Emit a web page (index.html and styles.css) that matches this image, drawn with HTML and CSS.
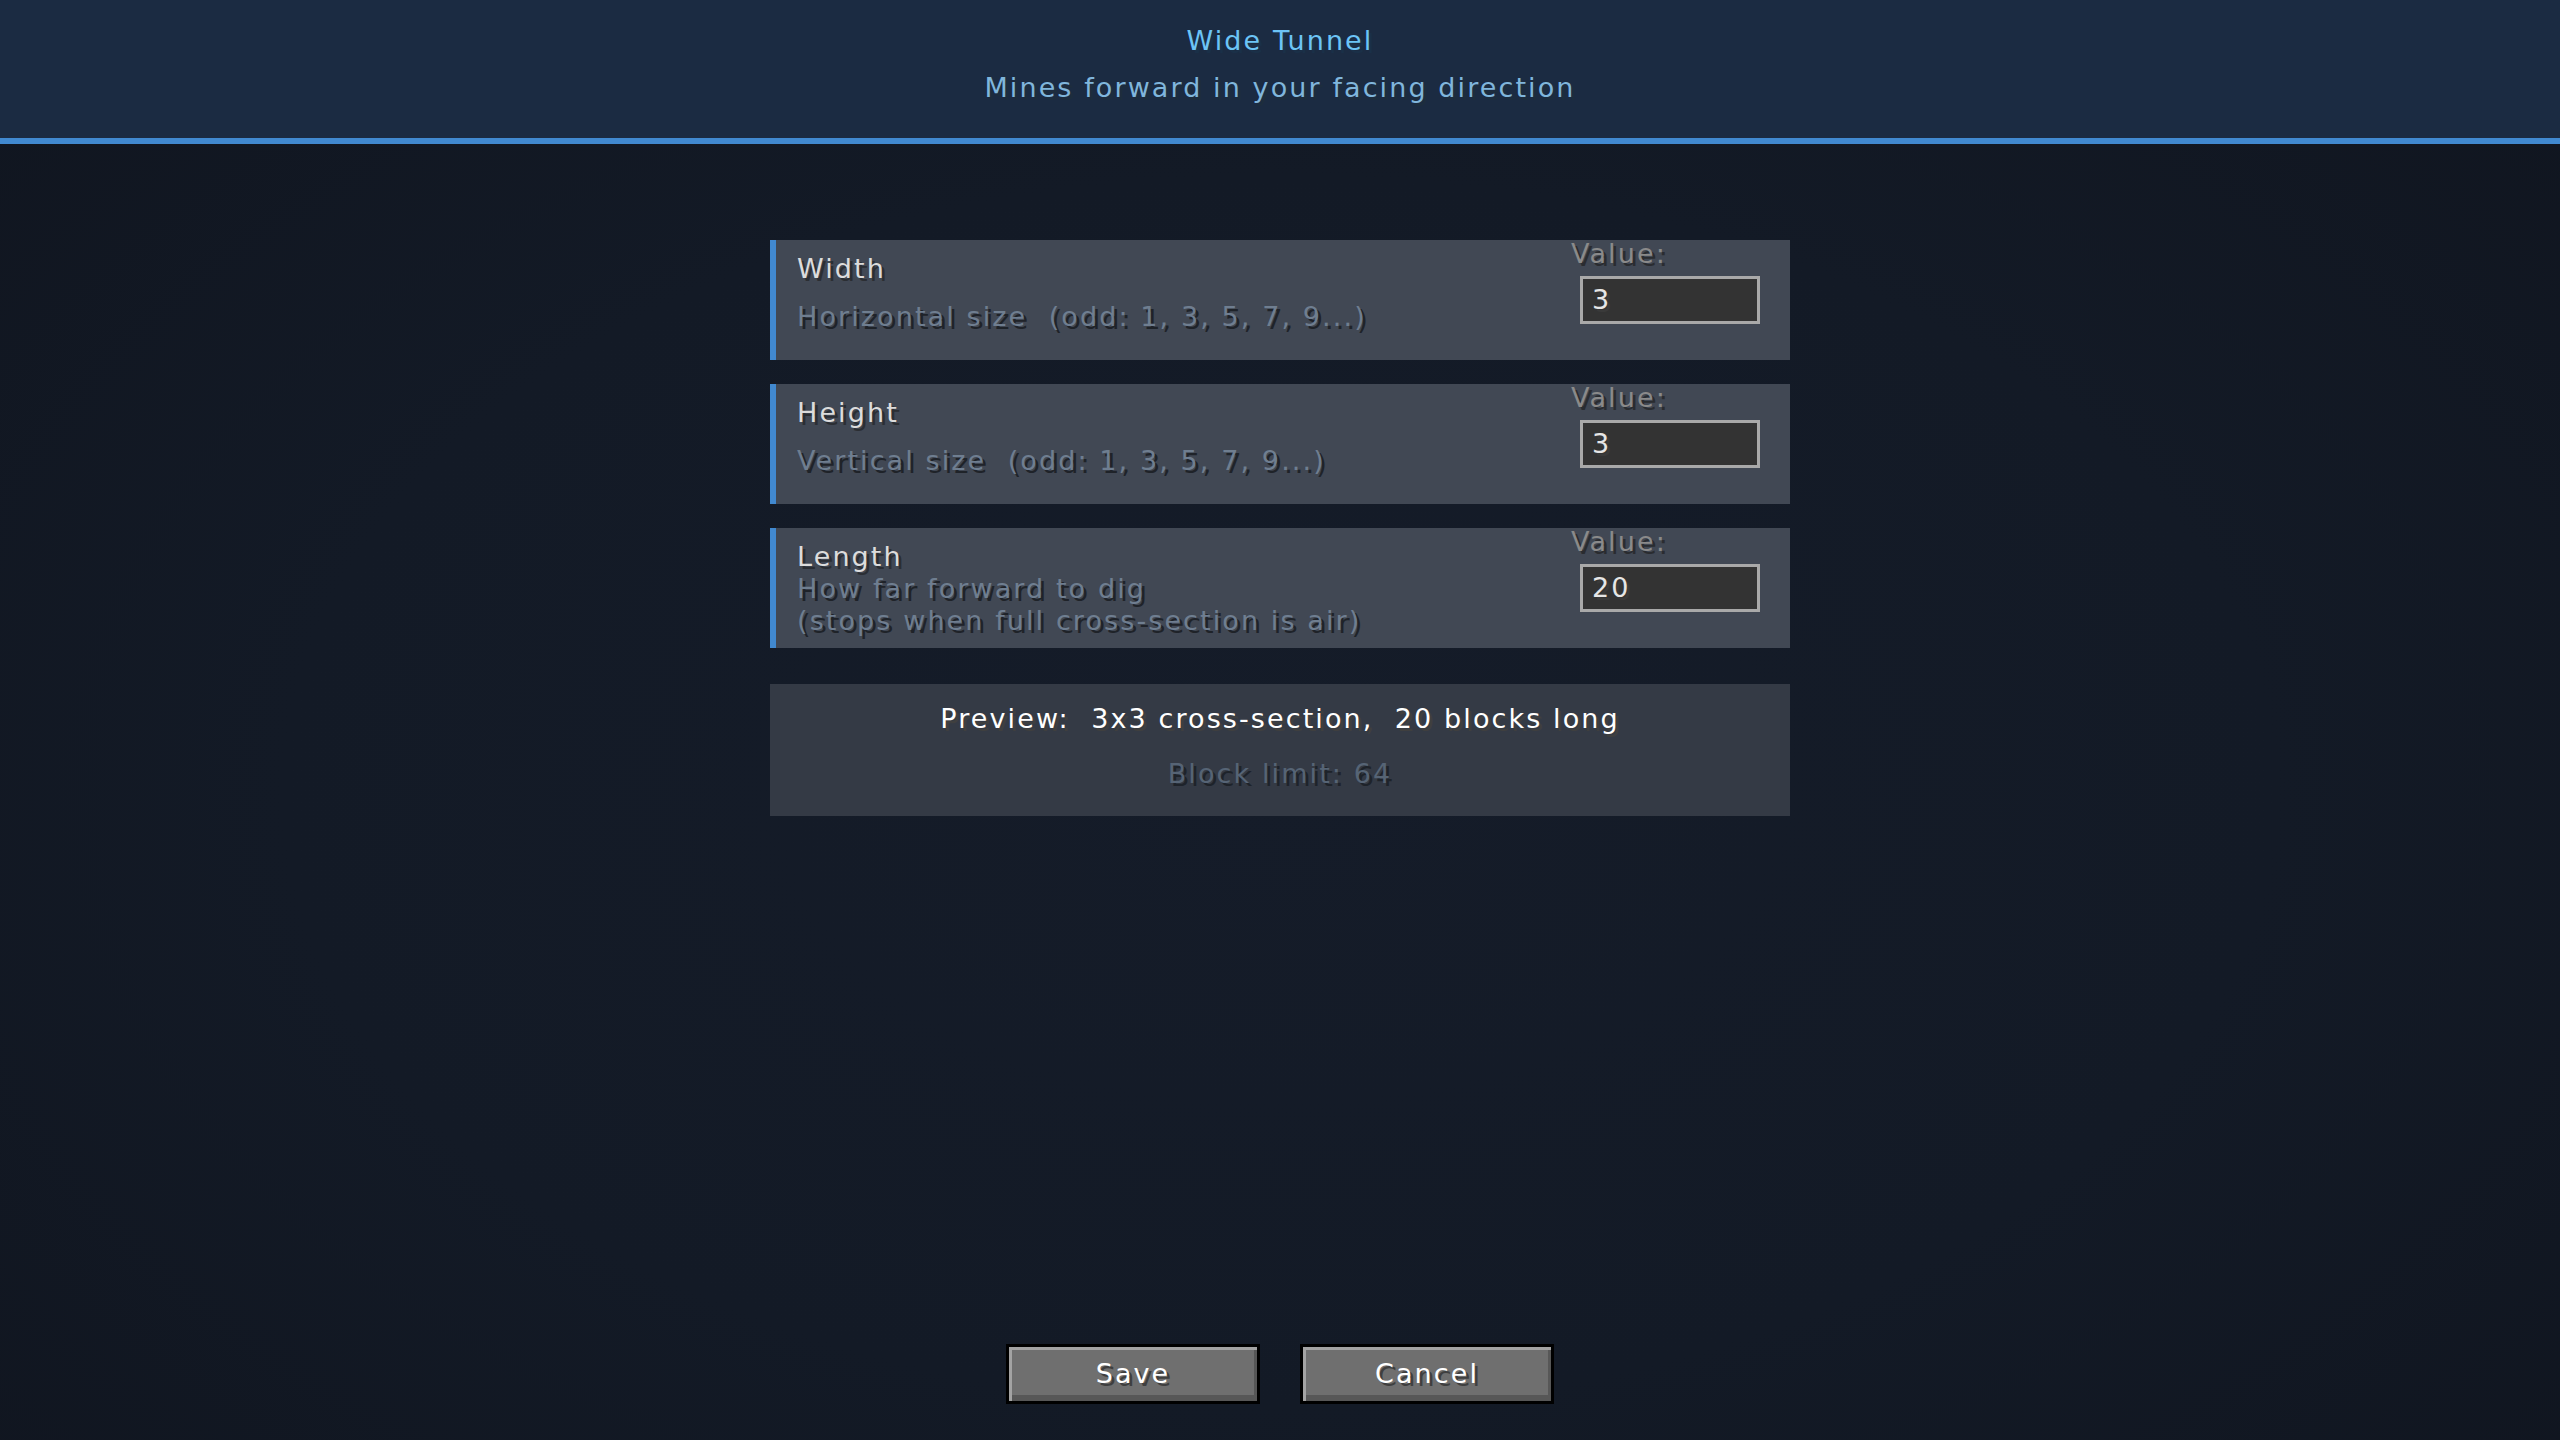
FILE: index.html
```html
<!DOCTYPE html>
<html lang="en">
    <head>
        <title>Wide Tunnel</title>
        <link rel="stylesheet" href="styles.css">
    </head>
    <body>

<div class="top">
    <div class="title">Wide Tunnel</div>
    <div class="subtitle">Mines forward in your facing direction</div>
</div>

<div class="content">
    <div class="setting">
        <div class="info">
            <div class="name">Width</div>
            <div class="desc single">Horizontal size  (odd: 1, 3, 5, 7, 9...)</div>
        </div>
        <div class="value">
            <div class="value-label">Value:</div>
            <div class="field">3</div>
        </div>
    </div>

    <div class="setting">
        <div class="info">
            <div class="name">Height</div>
            <div class="desc single">Vertical size  (odd: 1, 3, 5, 7, 9...)</div>
        </div>
        <div class="value">
            <div class="value-label">Value:</div>
            <div class="field">3</div>
        </div>
    </div>

    <div class="setting">
        <div class="info">
            <div class="name">Length</div>
            <div class="desc">How far forward to dig</div>
            <div class="desc">(stops when full cross-section is air)</div>
        </div>
        <div class="value">
            <div class="value-label">Value:</div>
            <div class="field">20</div>
        </div>
    </div>

    <div class="preview">
        <div class="preview-main">Preview:  3x3 cross-section,  20 blocks long</div>
        <div class="preview-limit">Block limit: 64</div>
    </div>
</div>

<div class="buttons">
    <div class="button">Save</div>
    <div class="button">Cancel</div>
</div>

    </body>
</html>
```

FILE: styles.css
```css
body {
    margin: 0;
    height: 1440px;
    display: flex;
    flex-direction: column;
    font-family: "DejaVu Sans", Verdana, sans-serif;
    font-size: 27px;
    letter-spacing: 2.1px;
    background: radial-gradient(ellipse at 50% 55%, #151c29 0, #131a26 55%, #10151f 100%);
    color: #e0e0e0;
}
.top {
    height: 112px;
    background-color: #1b2b42;
    border-bottom: solid 6px #4189d0;
    text-align: center;
    padding-top: 26px;
}
.title {
    line-height: 30px;
    color: #6cc4f6;
    text-shadow: 3px 3px 0 #1a3048;
}
.subtitle {
    line-height: 30px;
    margin-top: 17px;
    color: #80b6dc;
    text-shadow: 3px 3px 0 #1d2d3d;
}
.content {
    width: 1020px;
    margin: 96px auto 0;
    display: flex;
    flex-direction: column;
    gap: 24px;
}
.setting {
    height: 120px;
    display: flex;
    background-color: #414854;
    border-left: solid 6px #4189d0;
    padding-left: 21px;
}
.info {
    flex: 1;
    padding-top: 13px;
}
.name {
    line-height: 32px;
    color: #dcdcdc;
    text-shadow: 3px 3px 0 #2b2e33;
}
.desc {
    line-height: 32px;
    white-space: pre;
    color: #6f7e90;
    text-shadow: 3px 3px 0 #1f2329;
}
.desc.single {
    margin-top: 16px;
}
.value {
    width: 189px;
    padding-right: 30px;
}
.value-label {
    line-height: 28px;
    color: #8a8a8a;
    text-shadow: 3px 3px 0 #2a2c30;
}
.field {
    margin: 8px 0 0 9px;
    width: 180px;
    height: 48px;
    box-sizing: border-box;
    border: solid 3px #a9a9a9;
    background-color: #333333;
    padding-left: 9px;
    line-height: 42px;
    color: #e6e6e6;
    text-shadow: 3px 3px 0 #3a3a3a;
}
.preview {
    margin-top: 12px;
    height: 132px;
    box-sizing: border-box;
    padding-top: 19px;
    background-color: #343a45;
    text-align: center;
}
.preview-main {
    line-height: 32px;
    white-space: pre;
    color: #ffffff;
    text-shadow: 3px 3px 0 #3f3f3f;
}
.preview-limit {
    line-height: 32px;
    margin-top: 23px;
    color: #566475;
    text-shadow: 3px 3px 0 #1e232a;
}
.buttons {
    margin-top: auto;
    margin-bottom: 36px;
    display: flex;
    justify-content: center;
    gap: 40px;
}
.button {
    width: 254px;
    height: 60px;
    box-sizing: border-box;
    border: solid 3px #000;
    background-color: #6f6f6f;
    box-shadow: inset 3px 3px 0 #a3a3a3, inset -3px -6px 0 #575757;
    text-align: center;
    line-height: 54px;
    color: #ffffff;
    text-shadow: 3px 3px 0 #3f3f3f;
}
```
